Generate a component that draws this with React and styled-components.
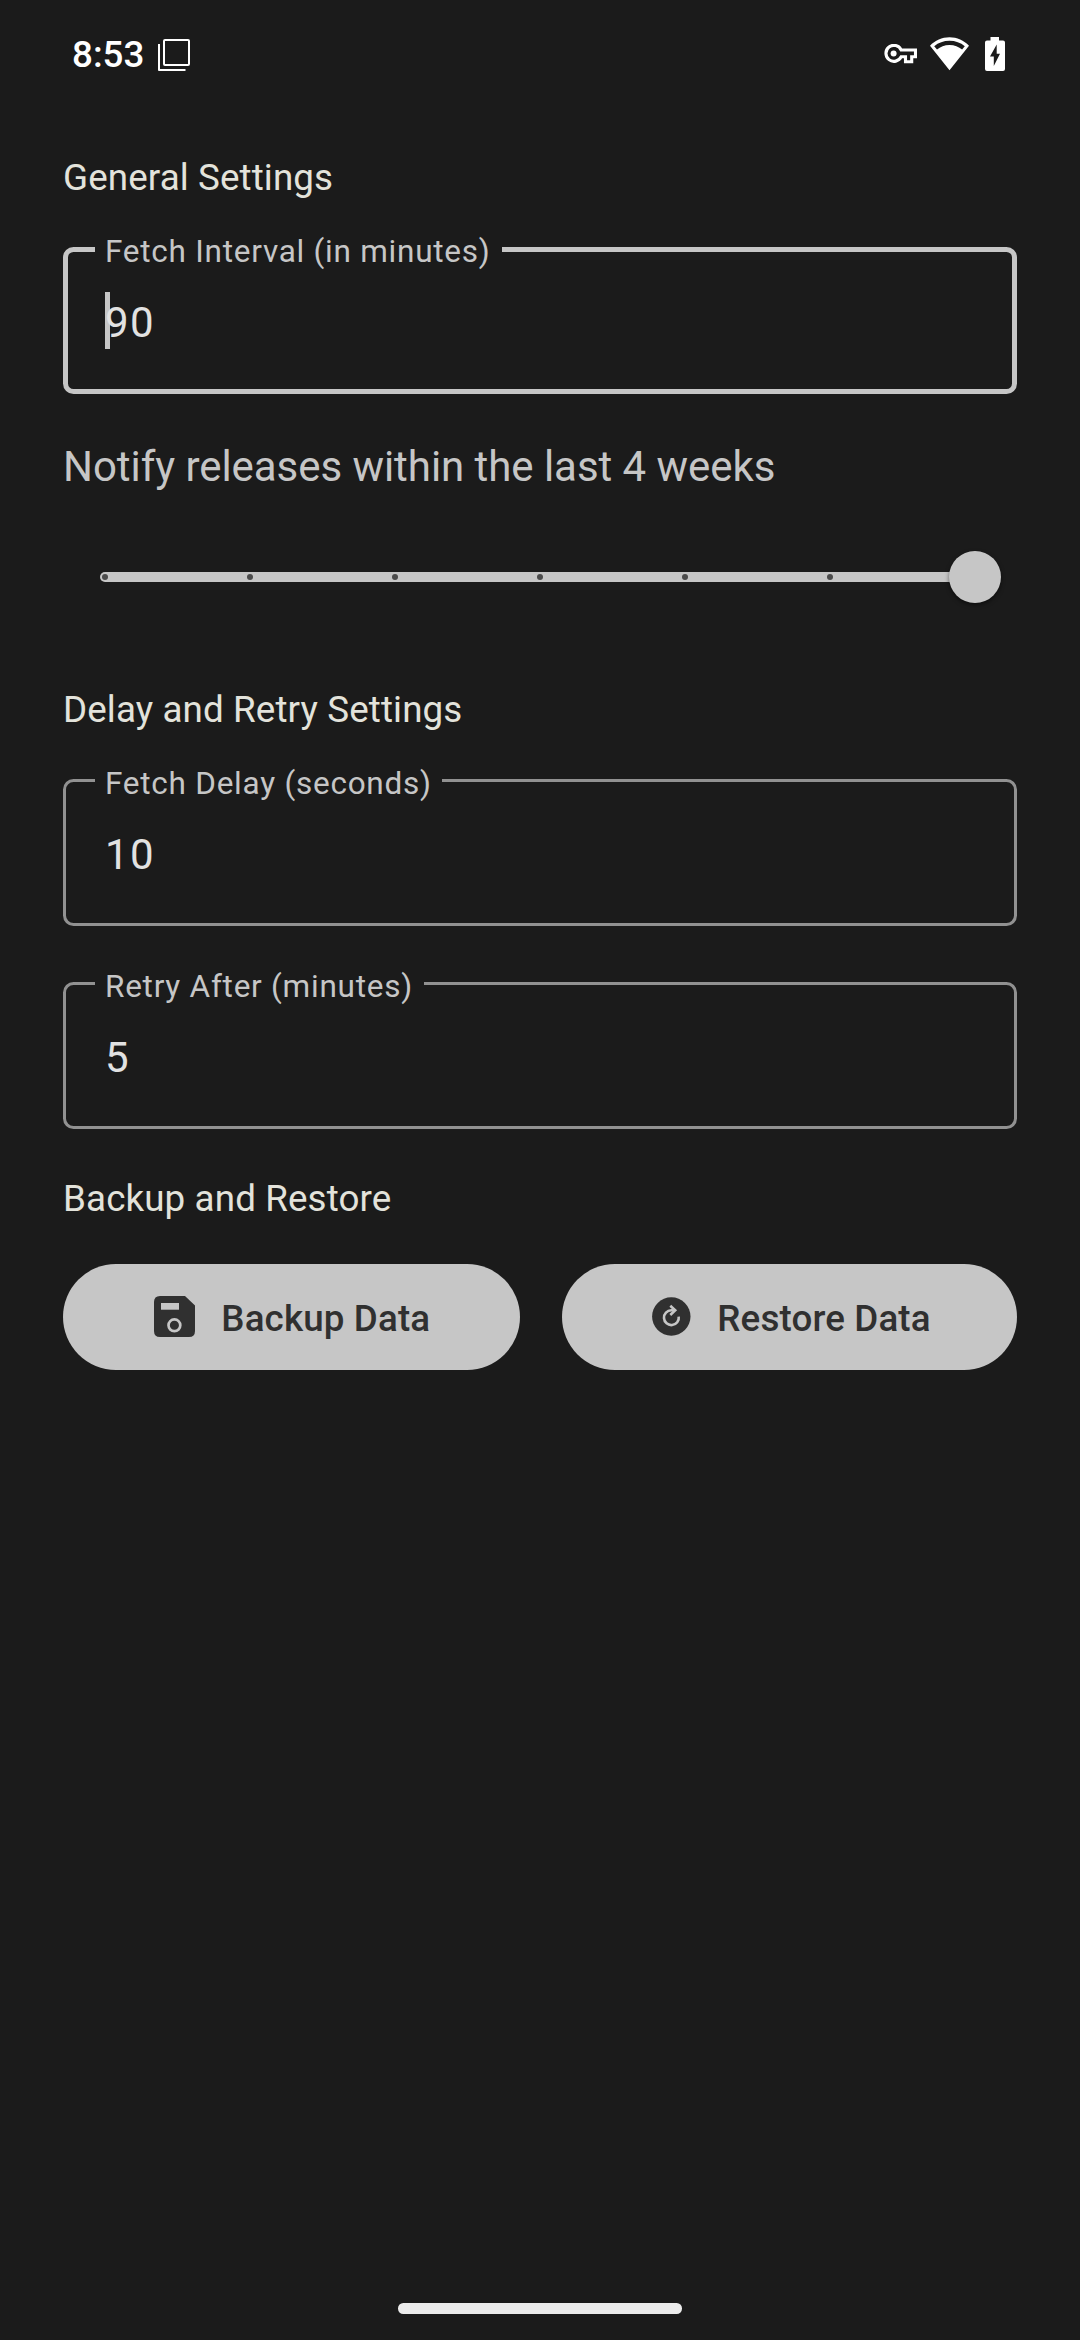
import React from "react";
import styled, { createGlobalStyle } from "styled-components";

const GlobalStyle = createGlobalStyle`
  * { box-sizing: border-box; }
  html, body { margin: 0; background: #1b1b1b; }
  body { font-family: Roboto, "Noto Sans", sans-serif; }
`;

const Screen = styled.div`
  width: 1080px;
  height: 2340px;
  background: #1b1b1b;
  display: flex;
  flex-direction: column;
  overflow: hidden;
`;

const StatusBar = styled.header`
  height: 110px;
  flex: none;
  padding: 0 75px 0 72px;
  display: flex;
  justify-content: space-between;
  align-items: center;
  color: #fff;
`;

const StatusGroup = styled.div`
  display: flex;
  align-items: center;
  gap: ${(p) => p.$gap}px;
  padding-bottom: ${(p) => p.$lift || 0}px;
`;

const Clock = styled.span`
  width: 72px;
  padding-bottom: 1px;
  font-size: 36.75px;
  font-weight: 500;
  line-height: 44px;
  white-space: nowrap;
`;

const Icon = styled.svg`
  display: block;
  flex: none;
`;

const Content = styled.main`
  flex: 1;
  padding: 41px 63px 0;
  display: flex;
  flex-direction: column;
`;

const Heading = styled.h2`
  margin: ${(p) => p.$top || 0}px 0 0;
  height: 52px;
  line-height: 54px;
  font-size: 36.75px;
  font-weight: 400;
  letter-spacing: 0.12px;
  color: #e3e3db;
`;

const Field = styled.fieldset`
  margin: ${(p) => p.$top}px 0 0;
  min-width: 0;
  height: ${(p) => (p.$focused ? 165 : 166)}px;
  padding: 0 ${(p) => (p.$focused ? 27 : 29)}px;
  border: ${(p) => (p.$focused ? "5px solid #c6c6c6" : "3px solid #919191")};
  border-radius: 10.5px;
`;

const FieldLabel = styled.legend`
  height: 41px;
  line-height: ${(p) => (p.$focused ? 45 : 47)}px;
  padding: 0 10px;
  width: ${(p) => p.$width}px;
  white-space: nowrap;
  font-size: 31.5px;
  letter-spacing: 0.75px;
  color: #c6c6c6;
`;

const FieldValue = styled.div`
  display: flex;
  align-items: center;
  height: 57px;
  margin-top: ${(p) => (p.$focused ? 22 : 23)}px;
  padding-left: 10px;
  font-size: 42px;
  line-height: 57px;
  letter-spacing: 1.3px;
  color: #e2e2e2;
`;

const Caret = styled.span`
  width: 5px;
  height: 57px;
  margin-right: -5px;
  background: #c6c6c6;
`;

const Digits = styled.span`
  padding-top: 4px;
  z-index: 1;
`;

const SliderLabel = styled.div`
  margin-top: 41px;
  height: 63px;
  line-height: 63px;
  font-size: 42px;
  letter-spacing: -0.05px;
  color: #c6c6c6;
`;

const SliderRow = styled.div`
  height: 54px;
  margin: 52px 16px 0 36.75px;
  display: flex;
  align-items: center;
`;

const SliderTrack = styled.div`
  flex: 1;
  height: 10.5px;
  margin-right: 20.5px;
  padding: 0 2.25px;
  border-radius: 5.25px;
  background: #c6c6c6;
  display: flex;
  align-items: center;
  justify-content: space-between;
`;

const Tick = styled.span`
  width: 6px;
  height: 6px;
  border-radius: 50%;
  background: #4b4b4b;
`;

const Thumb = styled.span`
  width: 52.5px;
  height: 52.5px;
  margin: 0 -23.25px;
  border-radius: 50%;
  background: #c6c6c6;
  box-shadow: 0 2px 4px rgba(0, 0, 0, 0.5);
  flex: none;
`;

const Actions = styled.div`
  display: flex;
  gap: 42px;
  margin-top: 40px;
`;

const Button = styled.button`
  flex: 1;
  height: 106px;
  padding: 0 0 0 ${(p) => p.$inset}px;
  border: 0;
  border-radius: 53px;
  background: #c6c6c6;
  color: #303030;
  font: 500 36.75px/52px Roboto, sans-serif;
  letter-spacing: 0.14px;
  display: flex;
  align-items: center;
  gap: 26.3px;
`;

const ButtonText = styled.span`
  padding-top: 4px;
`;

const NavBar = styled.footer`
  height: 37px;
  flex: none;
  display: flex;
  justify-content: center;
`;

const NavHandle = styled.div`
  width: 284px;
  height: 10.5px;
  border-radius: 5.25px;
  background: #ececec;
`;

function TextField({ label, value, focused, top, labelWidth }) {
  return (
    <Field $focused={focused} $top={top}>
      <FieldLabel $focused={focused} $width={labelWidth}>{label}</FieldLabel>
      <FieldValue $focused={focused}>
        {focused && <Caret />}
        <Digits>{value}</Digits>
      </FieldValue>
    </Field>
  );
}

const WindowsIcon = () => (
  <Icon width="32" height="32" viewBox="0 0 32 32" fill="none" stroke="#fff" strokeWidth="2">
    <rect x="6" y="1" width="25" height="25" rx="1" />
    <path d="M1 5V31H27.5" strokeLinejoin="round" />
  </Icon>
);

const KeyIcon = () => (
  <Icon width="33" height="20" viewBox="0 0 33 20" fill="none">
    <path
      d="M17.2 6H31.5V12.7H27.7V17.8H21.5V12.7H17.2A8 8 0 1 1 17.2 6Z"
      stroke="#fff"
      strokeWidth="3.1"
    />
    <circle cx="9.6" cy="9.4" r="3" fill="#fff" />
  </Icon>
);

const WifiIcon = () => (
  <Icon width="42" height="34" viewBox="0 0 42 34">
    <path
      fillRule="evenodd"
      fill="#fff"
      d="M0 8.7C5 3.3 12 .2 19.5 .2S34 3.3 39 8.7L19.5 33.3ZM4.2 9.2L7 12.6C10.3 9.7 14.6 7.9 19.5 7.9S28.8 9.7 32.1 12.6L34.8 9.2C30.6 5.7 25.3 3.8 19.5 3.8S8.4 5.7 4.2 9.2Z"
    />
  </Icon>
);

const BatteryIcon = () => (
  <Icon width="20" height="34" viewBox="0 0 20 34">
    <path
      fillRule="evenodd"
      fill="#fff"
      d="M5.5 0H14V3.5H18Q20 3.5 20 5.5V32Q20 34 18 34H2Q0 34 0 32V5.5Q0 3.5 2 3.5H5.5ZM11.7 7.5L5 19.5H8.8V29L15 16.8H11.7Z"
    />
  </Icon>
);

const SaveIcon = () => (
  <Icon width="41" height="42" viewBox="0 0 41 42">
    <path
      fill="#303030"
      d="M6 0H31L41 9.5V35Q41 41 35 41H6Q0 41 0 35V6Q0 0 6 0Z"
    />
    <rect x="7" y="7" width="18" height="6.7" fill="#c6c6c6" />
    <circle cx="20.4" cy="29.3" r="5.9" fill="none" stroke="#c6c6c6" strokeWidth="2.7" />
  </Icon>
);

const RestoreIcon = () => (
  <Icon width="40" height="40" viewBox="0 0 40 40">
    <circle cx="20.3" cy="19.5" r="19.2" fill="#303030" />
    <g fill="none" stroke="#c6c6c6" strokeWidth="2.6">
      <path d="M27.7 19.6A7.4 7.4 0 1 1 20.3 13.3H24" />
      <path d="M19.3 8.8L24.2 13.3L19.3 18" />
    </g>
  </Icon>
);

export default function App() {
  return (
    <>
      <GlobalStyle />
      <Screen>
        <StatusBar>
          <StatusGroup $gap={14}>
            <Clock>8:53</Clock>
            <WindowsIcon />
          </StatusGroup>
          <StatusGroup $gap={13} $lift={2}>
            <KeyIcon />
            <WifiIcon />
            <BatteryIcon />
          </StatusGroup>
        </StatusBar>
        <Content>
          <Heading>General Settings</Heading>
          <TextField label="Fetch Interval (in minutes)" value="90" focused top={26} labelWidth={407} />
          <SliderLabel>Notify releases within the last 4 weeks</SliderLabel>
          <SliderRow>
            <SliderTrack>
              {[0, 1, 2, 3, 4, 5].map((step) => (
                <Tick key={step} />
              ))}
              <Thumb />
            </SliderTrack>
          </SliderRow>
          <Heading $top={79}>Delay and Retry Settings</Heading>
          <TextField label="Fetch Delay (seconds)" value="10" top={25} labelWidth={347} />
          <TextField label="Retry After (minutes)" value="5" top={37} labelWidth={329} />
          <Heading $top={43}>Backup and Restore</Heading>
          <Actions>
            <Button $inset={91}>
              <SaveIcon />
              <ButtonText>Backup Data</ButtonText>
            </Button>
            <Button $inset={89}>
              <RestoreIcon />
              <ButtonText>Restore Data</ButtonText>
            </Button>
          </Actions>
        </Content>
        <NavBar>
          <NavHandle />
        </NavBar>
      </Screen>
    </>
  );
}
